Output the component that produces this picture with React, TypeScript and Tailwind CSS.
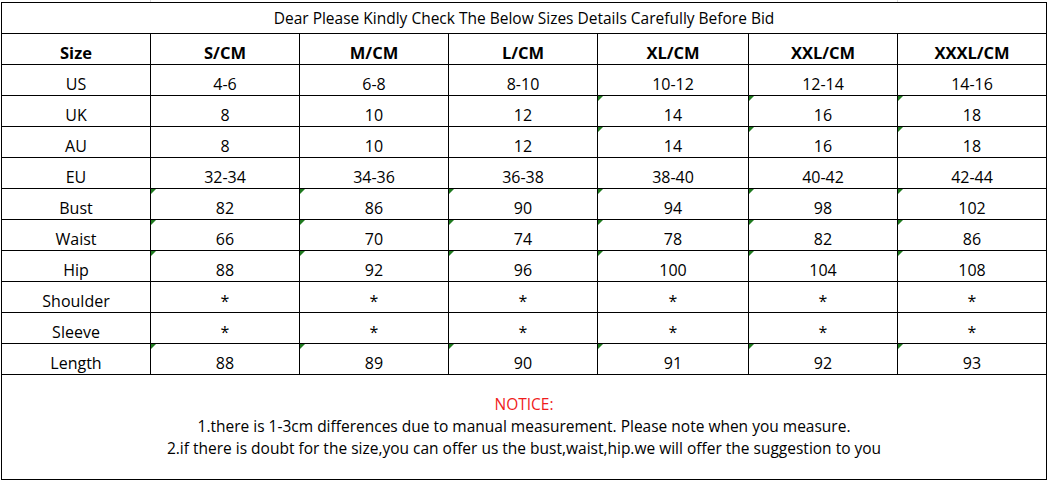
const columns = ["S/CM", "M/CM", "L/CM", "XL/CM", "XXL/CM", "XXXL/CM"];

// flag = which cells carry Excel's little green "number as text" mark
type Row = { label: string; values: string[]; flag: boolean[] };

const none = [false, false, false, false, false, false];
const upper = [false, false, false, true, true, true];
const all = [true, true, true, true, true, true];

const rows: Row[] = [
  { label: "US", values: ["4-6", "6-8", "8-10", "10-12", "12-14", "14-16"], flag: none },
  { label: "UK", values: ["8", "10", "12", "14", "16", "18"], flag: upper },
  { label: "AU", values: ["8", "10", "12", "14", "16", "18"], flag: upper },
  { label: "EU", values: ["32-34", "34-36", "36-38", "38-40", "40-42", "42-44"], flag: none },
  { label: "Bust", values: ["82", "86", "90", "94", "98", "102"], flag: all },
  { label: "Waist", values: ["66", "70", "74", "78", "82", "86"], flag: all },
  { label: "Hip", values: ["88", "92", "96", "100", "104", "108"], flag: all },
  { label: "Shoulder", values: ["*", "*", "*", "*", "*", "*"], flag: none },
  { label: "Sleeve", values: ["*", "*", "*", "*", "*", "*"], flag: none },
  { label: "Length", values: ["88", "89", "90", "91", "92", "93"], flag: all },
];

const widths = ["w-[149px]", "w-[149px]", "w-[149px]", "w-[149px]", "w-[151px]", "w-[149px]", "w-[149px]"];

function Cell({ children, flag, bold }: { children: React.ReactNode; flag?: boolean; bold?: boolean }) {
  return (
    <td
      className={`relative h-[31px] border border-black p-0 pb-[1px] text-center align-bottom leading-[20px] ${
        bold ? "font-bold text-[16.5px]" : "text-[16px]"
      }`}
    >
      {flag && (
        <span className="absolute left-0 top-0 h-0 w-0 border-r-[5px] border-t-[5px] border-r-transparent border-t-[#1f7a1f]" />
      )}
      {children}
    </td>
  );
}

export default function App() {
  return (
    <div
      className="h-[482px] w-[1050px] bg-white text-black"
      style={{ fontFamily: '"Open Sans", "Noto Sans", sans-serif' }}
    >
      <div className="flex h-[2px] pl-[150px]">
        <div className="h-full w-[748px] border-l border-r border-[#d9d9d9]" />
      </div>
      <table className="ml-[1px] w-[1046px] table-fixed border-collapse">
        <colgroup>
          {widths.map((w, i) => (
            <col key={i} className={w} />
          ))}
        </colgroup>
        <tbody>
          <tr>
            <td colSpan={7} className="h-[31px] border border-black p-0 text-center align-middle text-[15.5px] leading-[20px]">
              Dear Please Kindly Check The Below Sizes Details Carefully Before Bid
            </td>
          </tr>
          <tr>
            <Cell bold>Size</Cell>
            {columns.map((c) => (
              <Cell key={c} bold>
                {c}
              </Cell>
            ))}
          </tr>
          {rows.map((r) => (
            <tr key={r.label}>
              <Cell>{r.label}</Cell>
              {r.values.map((v, i) => (
                <Cell key={i} flag={r.flag[i]}>
                  {v}
                </Cell>
              ))}
            </tr>
          ))}
          <tr>
            <td colSpan={7} className="h-[105px] border border-black p-0 pb-[3px] text-center align-middle text-[15.5px] leading-[22px]">
              <div className="text-[#f01c1c]">NOTICE:</div>
              <div>1.there is 1-3cm differences due to manual measurement. Please note when you measure.</div>
              <div>2.if there is doubt for the size,you can offer us the bust,waist,hip.we will offer the suggestion to you</div>
            </td>
          </tr>
        </tbody>
      </table>
    </div>
  );
}
